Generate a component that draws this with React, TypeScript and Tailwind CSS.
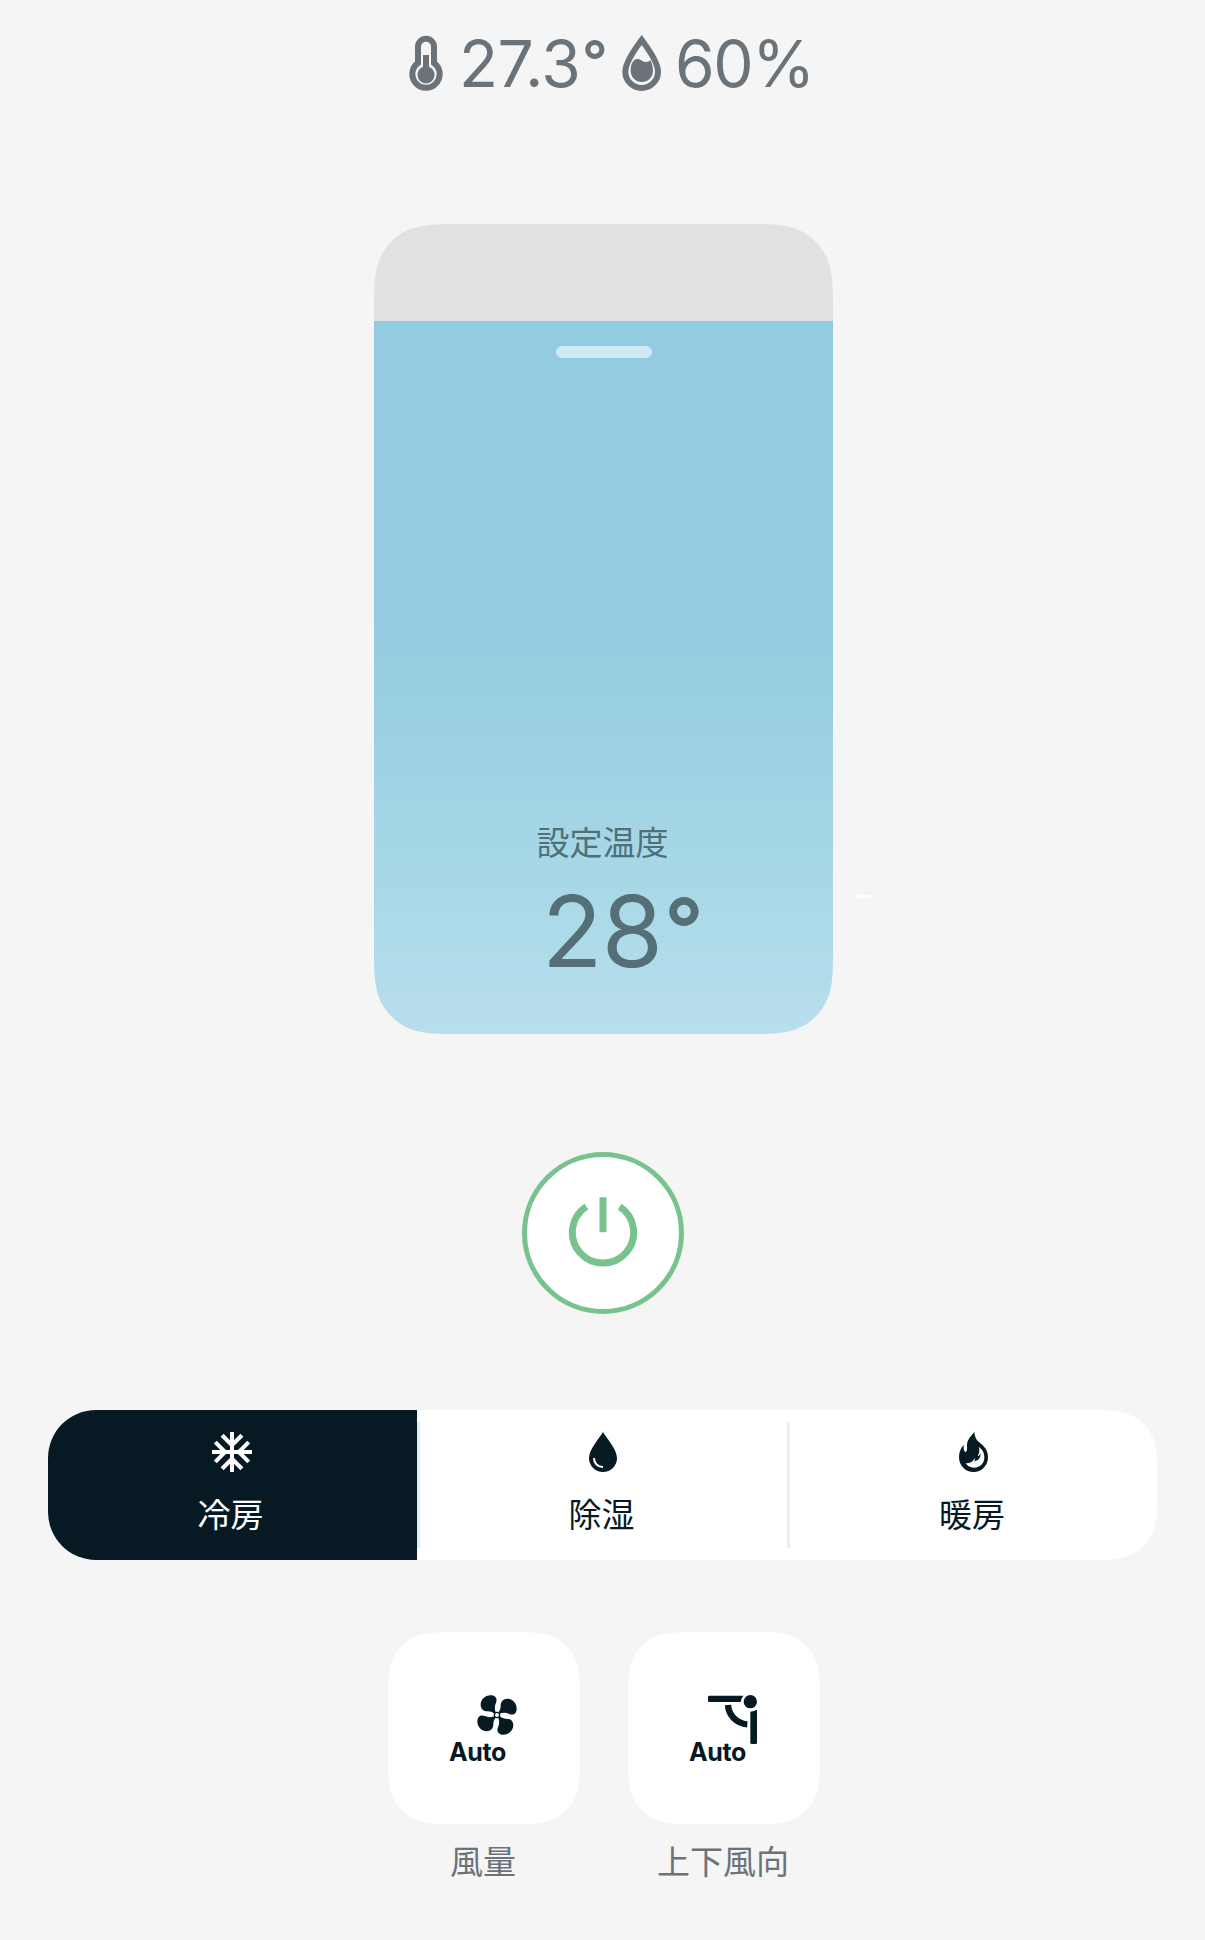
import React from "react";
import { MdAcUnit } from "react-icons/md";

/** Outline of a rounded rectangle with continuous-curvature corners. */
function smoothRect(w: number, h: number, r: number, squareLeft = false): React.CSSProperties {
  const a = 1.528665 * r, b = 1.08849296 * r, c = 0.86840694 * r, d = 0.63149379 * r;
  const e = 0.07491139 * r, f = 0.37282383 * r, g = 0.16905956 * r;
  const right =
    `H${w - a}C${w - b} 0 ${w - c} 0 ${w - d} ${e}C${w - f} ${g} ${w - g} ${f} ${w - e} ${d}C${w} ${c} ${w} ${b} ${w} ${a}` +
    `V${h - a}C${w} ${h - b} ${w} ${h - c} ${w - e} ${h - d}C${w - g} ${h - f} ${w - f} ${h - g} ${w - d} ${h - e}C${w - c} ${h} ${w - b} ${h} ${w - a} ${h}`;
  const left =
    `H${a}C${b} ${h} ${c} ${h} ${d} ${h - e}C${f} ${h - g} ${g} ${h - f} ${e} ${h - d}C0 ${h - c} 0 ${h - b} 0 ${h - a}` +
    `V${a}C0 ${b} 0 ${c} ${e} ${d}C${g} ${f} ${f} ${g} ${d} ${e}C${c} 0 ${b} 0 ${a} 0Z`;
  const p = squareLeft ? `M0 0${right}H0Z` : `M${a} 0${right}${left}`;
  return { clipPath: `path("${p}")` };
}

const Thermometer = () => (
  <svg className="h-[56px] w-[34px]" viewBox="57 44 102 168" fill="none">
    <path d="M84 128V79a24 24 0 0 1 48 0V128A41 41 0 1 1 84 128Z" stroke="#6a7379" strokeWidth="18" />
    <path d="M99 104H117V139.500A25.500 25.500 0 1 1 99 139.500Z" fill="#6a7379" />
  </svg>
);

const Humidity = () => (
  <svg className="h-[56px] w-[39px]" viewBox="697 44 117 168" fill="none">
    <path d="M756 59C742 78 707 122 707 154a49 49 0 0 0 98 0C805 122 770 78 756 59Z" stroke="#6a7379" strokeWidth="18" />
    <path d="M729 125C737 113 747 114 757 121C766 127 775 126 782 120C787 129 790 139 790 151a33.500 34 0 0 1-67 0C723 140 725 132 729 125Z" fill="#6a7379" />
  </svg>
);

const PowerIcon = () => (
  <svg className="relative -top-px h-[70px] w-[70px]" viewBox="174 170 210 210" fill="none" stroke="#78c28e">
    <rect x="270.500" y="173" width="17" height="101" rx="1" strokeWidth="4" fill="#78c28e" />
    <path d="M229 199A92 92 0 1 0 329 199" strokeWidth="21" />
  </svg>
);

const DropIcon = () => (
  <svg className="h-10 w-7" viewBox="204 96 84 120" fill="none">
    <path d="M246 96C236 114 204 147 204 175a42 41 0 0 0 84 0C288 147 256 114 246 96Z" fill="#071a24" />
    <path d="M219 174C219 190 230 201 246 201" stroke="#fff" strokeWidth="6" />
  </svg>
);

const FlameIcon = () => (
  <svg className="h-10 w-[29px]" viewBox="177 96 87 120" fill="none">
    <path d="M223 96C225 116 231 122 243 131C257 142 264 155 264 172a43.500 44 0 0 1-87 0C177 157 181 146 191 134C190 147 192 153 197 157C203 151 201 144 201 135C202 117 213 109 223 96Z" fill="#071a24" />
    <path d="M236 140C241 152 236 162 233 168C237 169 240 164 241 160C243 175 235 181 222 185C225 181 226 178 225 174C218 186 209 190 197 190C202 198 211 203 222 203C240 203 253 190 253 172C253 156 246 147 236 140Z" fill="#fff" />
  </svg>
);

const BLADE = "M-4-8C-8-20-7-27-3-37C3-51-7-59-19-59C-37-59-49-45-49-31C-49-18-40-11-28-11C-20-11-14-9-8-4Z";

const FanIcon = () => (
  <svg className="h-10 w-10" viewBox="-60 -60 120 120" fill="#071a24">
    <path d={BLADE} />
    <path d={BLADE} transform="rotate(90)" />
    <path d={BLADE} transform="rotate(180)" />
    <path d={BLADE} transform="rotate(270)" />
    <circle r="10" />
    <circle r="6" fill="#fff" />
  </svg>
);

const SwingIcon = () => (
  <svg className="h-[49px] w-[49px]" viewBox="263 225 147 147" fill="#071a24">
    <path d="M267 227H369Q362 236 361 246H267Q263 246 263 242V231Q263 227 267 227Z" />
    <circle cx="390" cy="245" r="20" />
    <path d="M390 275Q401 274 410 269V368Q410 372 406 372H394Q390 372 390 368Z" />
    <path d="M323 255C325 286 349 311 381 313" fill="none" stroke="#071a24" strokeWidth="19" />
  </svg>
);

function Mode({ label, icon, className }: { label: string; icon: React.ReactNode; className: string }) {
  return (
    <button className={`flex h-[150px] flex-col items-center ${className}`}>
      <span className="mt-[22px] mr-px flex h-10 items-center">{icon}</span>
      <span className="mt-[17px] mr-[3px] text-[33px] leading-[48px]">{label}</span>
    </button>
  );
}

function Option({ label, icon, iconClass }: { label: string; icon: React.ReactNode; iconClass: string }) {
  return (
    <div className="flex w-48 flex-col items-center">
      <button className="relative h-48 w-48 bg-white" style={smoothRect(192, 192, 48)}>
        <span className={`absolute ${iconClass}`}>{icon}</span>
        <span className="absolute top-[105px] left-[61px] font-['Inter'] text-[25px] leading-[30px] font-bold tracking-[-0.4px] text-[#071a24]">Auto</span>
      </button>
      <span className="mt-[12px] mr-[2px] text-[33px] leading-[48px] whitespace-nowrap text-[#6a7379]">{label}</span>
    </div>
  );
}

export default function App() {
  return (
    <main className="flex h-[1940px] w-[1205px] flex-col items-center overflow-hidden bg-[#f5f5f5] font-['Noto_Sans_CJK_JP',sans-serif]">
      <header className="mt-[35px] flex h-[56px] w-full items-start pl-[409px] font-['Inter'] text-[64px] leading-[58px] tracking-[-0.6px] text-[#6a7379]">
        <Thermometer />
        <span className="ml-[16px] flex w-[145px]">
          27.3<span className="ml-[2px] text-[56px] leading-[53px] font-semibold">°</span>
        </span>
        <span className="ml-[18px]"><Humidity /></span>
        <span className="ml-[14px] tracking-[-1.4px]">60%</span>
      </header>

      <div className="relative mt-[133px] ml-[2px]">
        <section className="flex h-[810px] w-[459px] flex-col bg-[#e1e1e1] pt-[97px]" style={smoothRect(459, 810, 60)}>
          <div className="flex flex-1 flex-col items-center bg-linear-[180deg,#93cbe0_0%,#93cbe0_42%,#a9d9e7_81%,#b9deed_100%] pt-[25px]">
            <div className="h-3 w-24 rounded-full bg-[#d0e9f2]" />
            <p className="mt-[459px] mr-[2px] text-[33px] leading-[48px] text-[#4f7079]">設定温度</p>
            <p className="mt-[16px] ml-[38px] flex font-['Inter'] text-[99px] leading-[100px] tracking-[-0.6px] text-[#556f77]">
              28<span className="ml-[2px] text-[86px] leading-[96px] font-semibold">°</span>
            </p>
          </div>
        </section>
        <div className="absolute top-[671px] left-[481px] h-[3px] w-4 rounded-full bg-[#fdfdfd]" />
      </div>

      <button className="mt-[118px] flex h-[162px] w-[162px] shrink-0 items-center justify-center rounded-full border-[5px] border-[#78c28e] bg-white">
        <PowerIcon />
      </button>

      <nav className="mt-[96px] flex h-[150px] w-[1110px] shrink-0 items-center rounded-l-[48px] bg-white text-[#071a24]" style={smoothRect(1110, 150, 48, true)}>
        <Mode label="冷房" icon={<MdAcUnit size={48} />} className="w-[369px] rounded-l-[48px] bg-[#071a24] text-white" />
        <div className="h-[126px] w-[3px] bg-[#e9ecef]" />
        <Mode label="除湿" icon={<DropIcon />} className="w-[367px]" />
        <div className="h-[126px] w-[3px] bg-[#ededed]" />
        <Mode label="暖房" icon={<FlameIcon />} className="w-[368px]" />
      </nav>

      <div className="mt-[72px] ml-[3px] flex gap-12">
        <Option label="風量" icon={<FanIcon />} iconClass="top-[63px] left-[89px]" />
        <Option label="上下風向" icon={<SwingIcon />} iconClass="top-[63px] left-[80px]" />
      </div>
    </main>
  );
}
